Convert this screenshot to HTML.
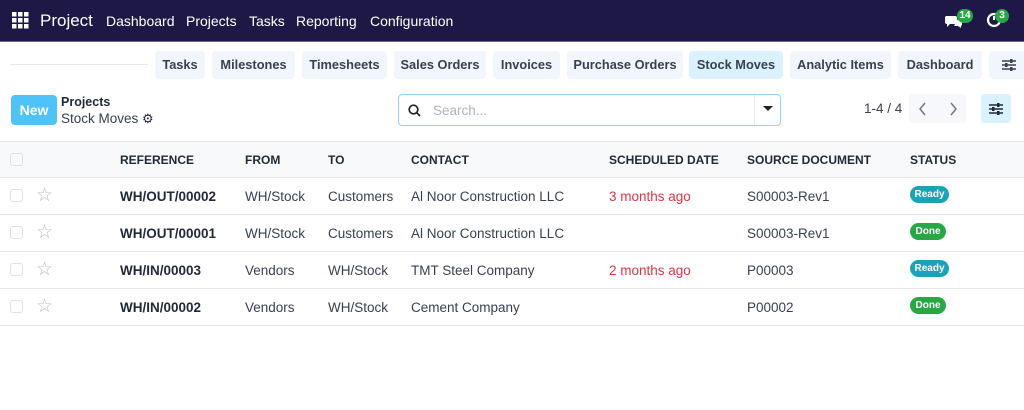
<!DOCTYPE html>
<html><head><meta charset="utf-8"><style>
*{box-sizing:border-box;margin:0;padding:0}
body{width:1024px;height:410px;overflow:hidden;background:#fff;font-family:"Liberation Sans",sans-serif;font-size:13.5px;color:#374151;position:relative}
.nav{position:absolute;left:0;top:0;width:1024px;height:42px;background:#1e1846;color:#fff;border-bottom:1px solid #6b6690}
.nav span{position:absolute;top:13px;font-size:14px}
.tab{position:absolute;top:51px;height:28px;background:#f1f6fc;border-radius:4px;font-weight:bold;font-size:12.8px;color:#374151;text-align:center;line-height:28px}
.a{position:absolute;white-space:nowrap}
.hdr{position:absolute;left:0;top:141px;width:1024px;height:37px;background:#f8f9fa;border-top:1px solid #e5e7eb;border-bottom:1px solid #e5e7eb}
.row{position:absolute;left:0;width:1024px;height:37px;border-bottom:1px solid #e5e7eb}
.cb{position:absolute;left:10px;width:13px;height:13px;border:1px solid #dde1e5;border-radius:3px;background:#fff}
.th{position:absolute;top:153px;font-weight:bold;font-size:12px;color:#1f2937}
.badge{position:absolute;left:910px;height:17px;border-radius:9px;color:#fff;font-weight:bold;font-size:10px;line-height:17px;text-align:center}
.ready{background:#1aa3b8;width:39px}.done{background:#28a745;width:36px}
.r{top:189px}
.star{position:absolute;left:36px;color:#b8bcc2;font-size:19px}
</style></head><body>
<div class="nav">
<svg style="position:absolute;left:12px;top:12px" width="17" height="17"><g fill="#fff"><rect x="0" y="0" width="4.5" height="4.5"/><rect x="6" y="0" width="4.5" height="4.5"/><rect x="12" y="0" width="4.5" height="4.5"/><rect x="0" y="6" width="4.5" height="4.5"/><rect x="6" y="6" width="4.5" height="4.5"/><rect x="12" y="6" width="4.5" height="4.5"/><rect x="0" y="12" width="4.5" height="4.5"/><rect x="6" y="12" width="4.5" height="4.5"/><rect x="12" y="12" width="4.5" height="4.5"/></g></svg>
<span style="left:40px;top:11px;font-size:17px">Project</span>
<span style="left:106px">Dashboard</span><span style="left:186px">Projects</span><span style="left:249px">Tasks</span><span style="left:296px">Reporting</span><span style="left:370px">Configuration</span>
<svg style="position:absolute;left:944px;top:13px" width="20" height="16"><path d="M2 3h9a2 2 0 0 1 2 2v4a2 2 0 0 1-2 2H6l-3 3v-3a2 2 0 0 1-2-2V5a2 2 0 0 1 1-2z" fill="#fff"/><path d="M14 6h3a1 1 0 0 1 1 1v5l-1 1v2l-3-2h-4" fill="#fff"/></svg>
<div style="position:absolute;left:957px;top:9px;width:16px;height:14px;border-radius:7px;background:#28a745;font-size:10px;font-weight:bold;text-align:center;line-height:14px">14</div>
<svg style="position:absolute;left:986px;top:12px" width="16" height="16"><circle cx="8" cy="8" r="6" fill="none" stroke="#fff" stroke-width="2.2"/><path d="M8 4v4" stroke="#fff" stroke-width="2"/></svg>
<div style="position:absolute;left:995px;top:9px;width:14px;height:14px;border-radius:7px;background:#28a745;font-size:10px;font-weight:bold;text-align:center;line-height:14px">3</div>
</div>
<div style="position:absolute;left:10px;top:64px;width:138px;height:1px;background:#e5e7eb"></div>
<div class="tab" style="left:155px;width:50px">Tasks</div>
<div class="tab" style="left:212px;width:83px">Milestones</div>
<div class="tab" style="left:302px;width:85px">Timesheets</div>
<div class="tab" style="left:394px;width:92px">Sales Orders</div>
<div class="tab" style="left:493px;width:67px">Invoices</div>
<div class="tab" style="left:567px;width:116px">Purchase Orders</div>
<div class="tab" style="left:689px;width:94px;background:#d9f2fd">Stock Moves</div>
<div class="tab" style="left:790px;width:101px">Analytic Items</div>
<div class="tab" style="left:898px;width:84px">Dashboard</div>
<div class="tab" style="left:989px;width:40px"><svg width="14" height="12" style="margin-top:8px"><path d="M0 2h14M0 6h14M0 10h14" stroke="#374151" stroke-width="1.5"/><rect x="8" y="0" width="2.5" height="4" fill="#374151"/><rect x="3" y="4" width="2.5" height="4" fill="#374151"/><rect x="8" y="8" width="2.5" height="4" fill="#374151"/></svg></div>

<div class="a" style="left:11px;top:95px;width:46px;height:30px;background:#4fc3f7;border-radius:4px;color:#fff;font-weight:bold;font-size:14px;text-align:center;line-height:30px">New</div>
<div class="a" style="left:61px;top:95px;font-weight:bold;font-size:12.5px;color:#1f2937">Projects</div>
<div class="a" style="left:61px;top:111px;font-size:13.5px">Stock Moves <span style="font-size:13px;color:#1f2937">⚙</span></div>
<div class="a" style="left:398px;top:94px;width:383px;height:32px;border:1px solid #8fd3f5;border-radius:4px"></div>
<svg class="a" style="left:408px;top:104px" width="13" height="13"><circle cx="5.5" cy="5.5" r="4.3" fill="none" stroke="#222" stroke-width="1.7"/><path d="M8.5 8.5L12 12" stroke="#222" stroke-width="1.8"/></svg>
<div class="a" style="left:433px;top:103px;color:#adb5bd;font-size:13.5px">Search...</div>
<div class="a" style="left:754px;top:95px;width:1px;height:30px;background:#e5e7eb"></div>
<div class="a" style="left:763px;top:106px;width:0;height:0;border-left:5px solid transparent;border-right:5px solid transparent;border-top:5px solid #222"></div>
<div class="a" style="left:864px;top:101px;font-size:13.5px">1-4 / 4</div>
<div class="a" style="left:909px;top:94px;width:57px;height:29px;background:#f6f8fb;border-radius:3px"></div>
<svg class="a" style="left:918px;top:102px" width="40" height="14"><path d="M7 1L2 7l5 6M33 1l5 6-5 6" stroke="#6b7280" stroke-width="1.4" fill="none"/></svg>
<div class="a" style="left:981px;top:94px;width:30px;height:29px;background:#d9f2fd;border-radius:3px"></div>
<svg class="a" style="left:989px;top:103px" width="14" height="12"><path d="M0 2h14M0 6h14M0 10h14" stroke="#1f2937" stroke-width="1.5"/><rect x="8" y="0" width="2.5" height="4" fill="#1f2937"/><rect x="3" y="4" width="2.5" height="4" fill="#1f2937"/><rect x="8" y="8" width="2.5" height="4" fill="#1f2937"/></svg>

<div class="hdr"></div>
<div class="cb" style="top:153px;background:#f8f9fa"></div>
<div class="th" style="left:120px">REFERENCE</div><div class="th" style="left:245px">FROM</div><div class="th" style="left:328px">TO</div><div class="th" style="left:411px">CONTACT</div><div class="th" style="left:609px">SCHEDULED DATE</div><div class="th" style="left:747px">SOURCE DOCUMENT</div><div class="th" style="left:910px">STATUS</div>

<div class="row" style="top:178px"></div><div class="row" style="top:215px"></div><div class="row" style="top:252px"></div><div class="row" style="top:289px"></div>

<div class="cb" style="top:189px"></div><div class="cb" style="top:226px"></div><div class="cb" style="top:263px"></div><div class="cb" style="top:300px"></div>
<div class="star" style="top:184px">☆</div>
<div class="star" style="top:221px">☆</div>
<div class="star" style="top:258px">☆</div>
<div class="star" style="top:295px">☆</div>

<div class="a" style="left:120px;top:189px;font-weight:bold;color:#1f2937">WH/OUT/00002</div>
<div class="a" style="left:245px;top:189px">WH/Stock</div><div class="a" style="left:328px;top:189px">Customers</div>
<div class="a" style="left:411px;top:189px">Al Noor Construction LLC</div>
<div class="a" style="left:609px;top:189px;color:#dc3545">3 months ago</div>
<div class="a" style="left:747px;top:189px">S00003-Rev1</div>
<div class="badge ready" style="top:186px">Ready</div>

<div class="a" style="left:120px;top:226px;font-weight:bold;color:#1f2937">WH/OUT/00001</div>
<div class="a" style="left:245px;top:226px">WH/Stock</div><div class="a" style="left:328px;top:226px">Customers</div>
<div class="a" style="left:411px;top:226px">Al Noor Construction LLC</div>
<div class="a" style="left:747px;top:226px">S00003-Rev1</div>
<div class="badge done" style="top:223px">Done</div>

<div class="a" style="left:120px;top:263px;font-weight:bold;color:#1f2937">WH/IN/00003</div>
<div class="a" style="left:245px;top:263px">Vendors</div><div class="a" style="left:328px;top:263px">WH/Stock</div>
<div class="a" style="left:411px;top:263px">TMT Steel Company</div>
<div class="a" style="left:609px;top:263px;color:#dc3545">2 months ago</div>
<div class="a" style="left:747px;top:263px">P00003</div>
<div class="badge ready" style="top:260px">Ready</div>

<div class="a" style="left:120px;top:300px;font-weight:bold;color:#1f2937">WH/IN/00002</div>
<div class="a" style="left:245px;top:300px">Vendors</div><div class="a" style="left:328px;top:300px">WH/Stock</div>
<div class="a" style="left:411px;top:300px">Cement Company</div>
<div class="a" style="left:747px;top:300px">P00002</div>
<div class="badge done" style="top:297px">Done</div>
</body></html>
